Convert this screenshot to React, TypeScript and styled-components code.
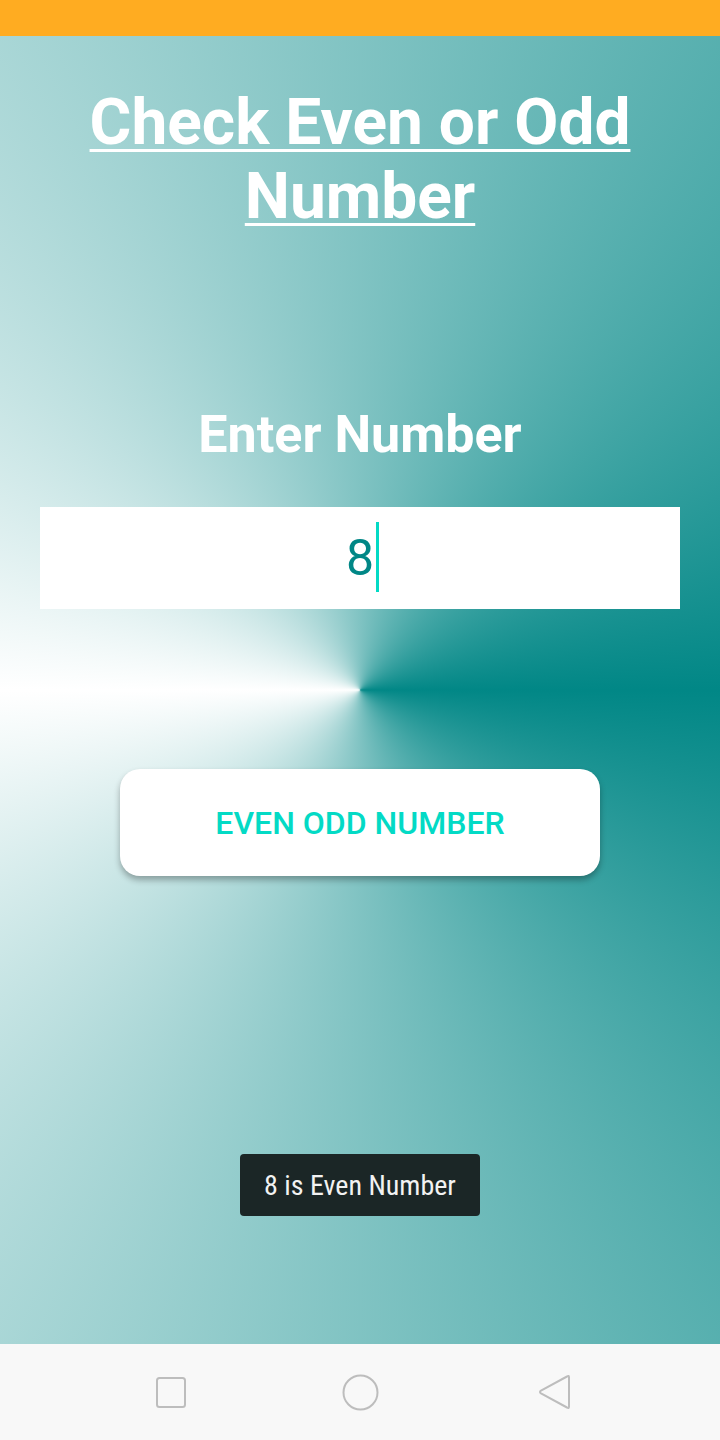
import React from "react";
import styled, { createGlobalStyle } from "styled-components";

const Global = createGlobalStyle`
  html, body { margin: 0; padding: 0; }
  body { font-family: Roboto, "Noto Sans", sans-serif; }
`;

const Screen = styled.div`
  width: 720px;
  height: 1440px;
  display: flex;
  flex-direction: column;
  overflow: hidden;
`;

const StatusBar = styled.div`
  height: 36px;
  flex: 0 0 36px;
  background: #ffac21;
`;

const Content = styled.main`
  flex: 1;
  display: flex;
  flex-direction: column;
  align-items: center;
  background: conic-gradient(from 90deg at 50% 50%, #018786 0deg, #ffffff 180deg, #018786 360deg);
`;

const Title = styled.h1`
  margin: 50px 0 0;
  padding: 0 40px;
  font-family: Roboto, sans-serif;
  font-weight: 700;
  font-size: 64px;
  line-height: 74px;
  color: #ffffff;
  text-align: center;
  text-decoration: underline;
  text-decoration-thickness: 3px;
  text-underline-offset: 5px;
`;

const Label = styled.h2`
  margin: 172px 0 0;
  font-family: Roboto, sans-serif;
  font-weight: 700;
  font-size: 52px;
  line-height: 58px;
  color: #ffffff;
  text-align: center;
`;

const InputBox = styled.div`
  margin-top: 43px;
  width: 640px;
  height: 102px;
  background: #ffffff;
  display: flex;
  align-items: center;
  justify-content: center;
`;

const Value = styled.span`
  position: relative;
  font-family: Roboto, sans-serif;
  font-size: 50px;
  color: #018786;
  &::after {
    content: "";
    position: absolute;
    left: calc(100% + 2px);
    top: -7px;
    width: 3px;
    height: 70px;
    background: #03dac5;
  }
`;

const ActionButton = styled.button`
  margin-top: 160px;
  width: 480px;
  height: 107px;
  border: none;
  border-radius: 20px;
  background: #ffffff;
  box-shadow: 0 4px 6px rgba(0, 0, 0, 0.3);
  font-family: Roboto, sans-serif;
  font-weight: 500;
  font-size: 32px;
  color: #03dac5;
  text-transform: uppercase;
  cursor: pointer;
`;

const Toast = styled.div`
  margin-top: auto;
  margin-bottom: 128px;
  width: 240px;
  height: 62px;
  border-radius: 4px;
  background: #1b2626;
  display: flex;
  align-items: center;
  justify-content: center;
  font-family: Roboto, sans-serif;
  font-size: 28px;
  font-stretch: 85%;
  color: #f2f2f2;
`;

const NavBar = styled.nav`
  height: 96px;
  flex: 0 0 96px;
  box-sizing: border-box;
  padding-left: 5px;
  background: #f8f8f8;
  display: flex;
  align-items: center;
  justify-content: center;
  gap: 156px;
`;

const NavIcon = styled.svg`
  display: block;
  fill: none;
  stroke: #bdbdbd;
  stroke-width: 2;
  stroke-linejoin: round;
`;

export default function App() {
  return (
    <>
      <Global />
      <Screen>
        <StatusBar />
        <Content>
          <Title>Check Even or Odd Number</Title>
          <Label>Enter Number</Label>
          <InputBox>
            <Value>8</Value>
          </InputBox>
          <ActionButton>Even Odd Number</ActionButton>
          <Toast>8 is Even Number</Toast>
        </Content>
        <NavBar>
          <NavIcon width="30" height="31" viewBox="0 0 30 31">
            <rect x="1" y="1" width="28" height="29" rx="2.5" />
          </NavIcon>
          <NavIcon width="37" height="37" viewBox="0 0 37 37">
            <circle cx="18.5" cy="18.5" r="17" />
          </NavIcon>
          <NavIcon width="35" height="36" viewBox="0 0 35 36">
            <path d="M32 2.5 Q34 1 34 3.5 L34 32.5 Q34 35 32 33.5 L6 19.3 Q4 18 6 16.7 Z" />
          </NavIcon>
        </NavBar>
      </Screen>
    </>
  );
}
